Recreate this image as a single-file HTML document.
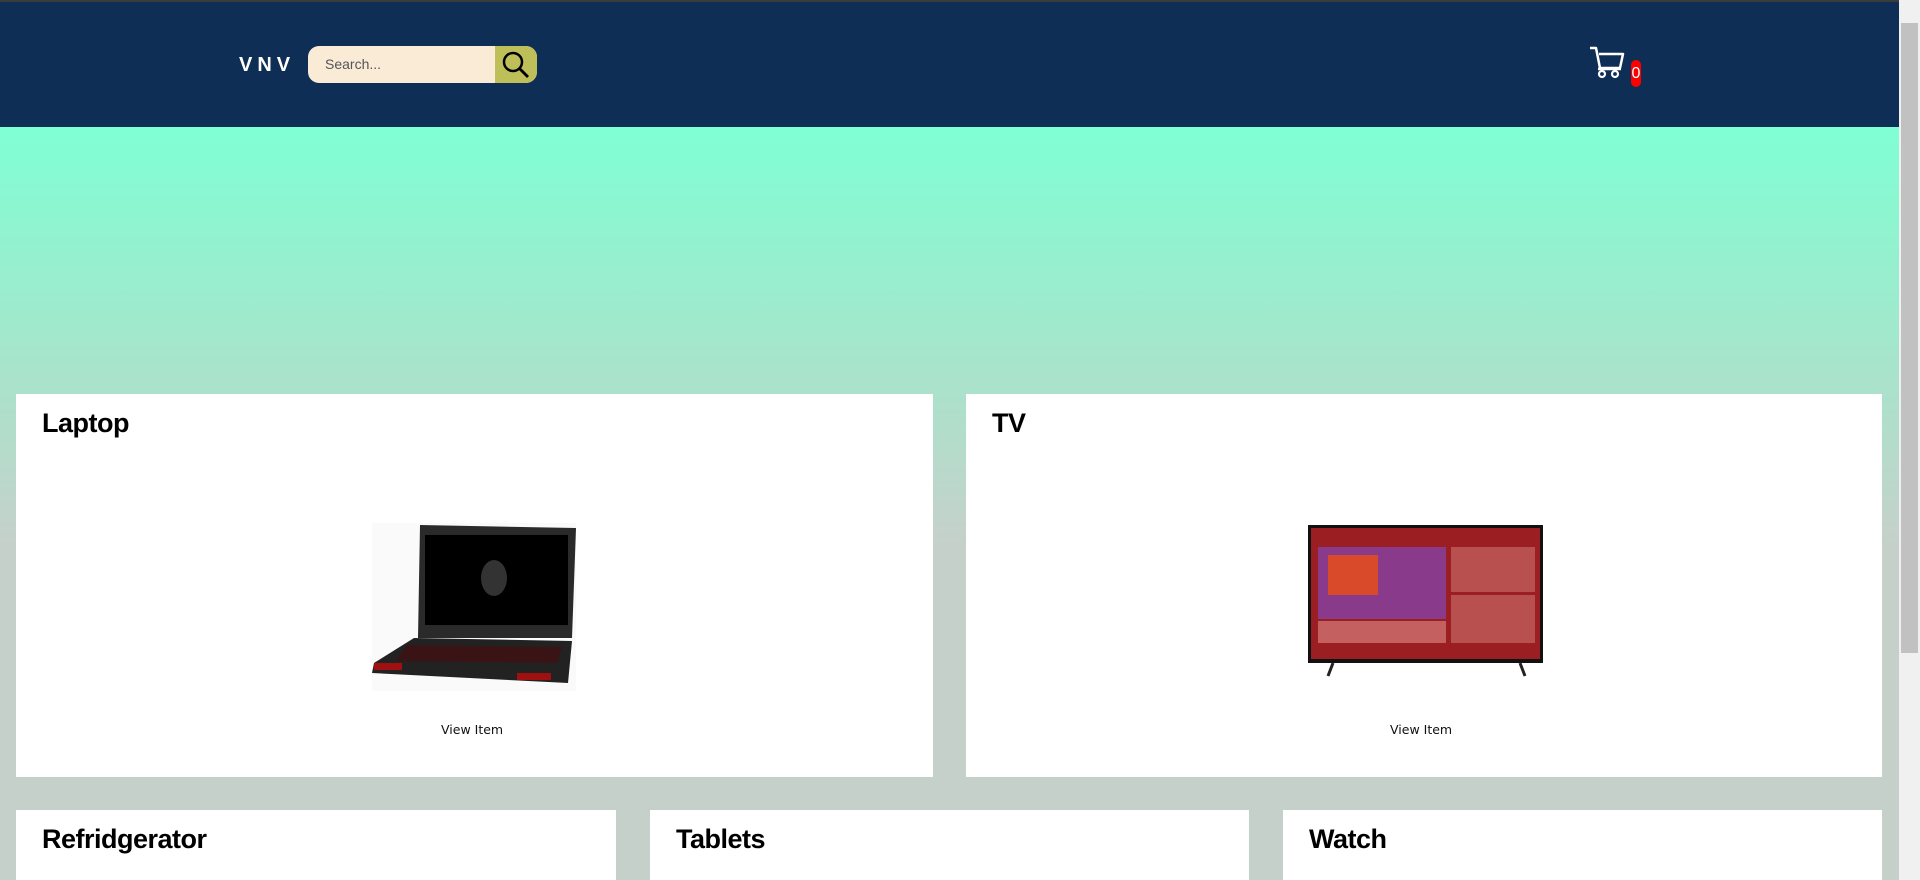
<!DOCTYPE html>
<html><head><style>
*{margin:0;padding:0;box-sizing:border-box}
body{width:1920px;height:880px;overflow:hidden;position:relative;font-family:"Liberation Sans",sans-serif;background:#c6d0cb}
.top{position:absolute;left:0;top:0;width:1899px;height:2px;background:#3c3c3c}
.hdr{position:absolute;left:0;top:2px;width:1899px;height:125px;background:#0f2e55}
.grad{position:absolute;left:0;top:127px;width:1899px;height:753px;background:linear-gradient(#7fffd4 0px,#a9e3cb 250px,#c6d0cb 420px,#c6d0cb 753px)}
.logo{position:absolute;left:239px;top:54px;color:#fff;font-weight:bold;font-size:20px;letter-spacing:5px}
.search{position:absolute;left:308px;top:46px;width:229px;height:37px;background:#faebd7;border-radius:11px;overflow:hidden}
.search span{position:absolute;left:17px;top:10px;font-size:14px;color:#555}
.search .btn{position:absolute;right:0;top:0;width:42px;height:37px;background:#bfbf5a}
.sb{position:absolute;left:1899px;top:0;width:21px;height:880px;background:#f0f0f0}
.sb .th{position:absolute;left:2px;top:23px;width:17px;height:630px;background:#c1c1c1}
.card{position:absolute;background:#fff}
.card h2{position:absolute;left:26px;top:14px;font-size:27px;font-weight:bold;color:#000;letter-spacing:-0.5px}
.vi{position:absolute;font-family:"DejaVu Sans",sans-serif;font-size:12.5px;color:#111}
</style></head><body>
<div class="top"></div>
<div class="hdr"></div>
<div class="grad"></div>
<div class="logo">VNV</div>
<div class="search"><span>Search...</span><div class="btn">
<svg width="42" height="37" viewBox="0 0 42 37"><circle cx="18" cy="16" r="9" fill="none" stroke="#000" stroke-width="2.5"/><line x1="24.5" y1="22.5" x2="33" y2="31" stroke="#000" stroke-width="2.8"/></svg></div></div>
<svg style="position:absolute;left:1588px;top:45px" width="40" height="36" viewBox="0 0 40 36"><path d="M2 3h6l4 20h20l3-14H11" fill="none" stroke="#fff" stroke-width="2.5" stroke-linejoin="round"/><line x1="10" y1="24" x2="33" y2="24" stroke="#fff" stroke-width="2.5"/><circle cx="14" cy="29" r="3" fill="none" stroke="#fff" stroke-width="2.2"/><circle cx="27" cy="29" r="3" fill="none" stroke="#fff" stroke-width="2.2"/></svg>
<div style="position:absolute;left:1631px;top:60px;width:10px;height:27px;background:#f00;border-radius:5px;color:#fff;font-size:16px;text-align:center;line-height:27px">0</div>
<div class="sb"><div class="th"></div></div>

<div class="card" style="left:16px;top:394px;width:917px;height:383px"><h2>Laptop</h2>
<svg style="position:absolute;left:356px;top:129px" width="204" height="168" viewBox="0 0 204 168">
<rect width="204" height="168" fill="#fafafa"/>
<path d="M48 2 L204 5 L200 115 L46 115Z" fill="#2a2a2a"/>
<rect x="53" y="12" width="143" height="90" fill="#000"/>
<ellipse cx="122" cy="55" rx="13" ry="18" fill="#333"/>
<path d="M42 115 L200 118 L196 160 L0 150 L2 140Z" fill="#222"/>
<path d="M35 122 L190 124 L185 140 L24 138Z" fill="#3a1414"/>
<rect x="2" y="140" width="28" height="7" fill="#a01010"/>
<rect x="145" y="150" width="34" height="7" fill="#a01010"/>
</svg>
<div class="vi" style="left:425px;top:328px">View Item</div></div>

<div class="card" style="left:966px;top:394px;width:916px;height:383px"><h2>TV</h2>
<svg style="position:absolute;left:342px;top:131px" width="235" height="166" viewBox="0 0 235 166">
<rect width="235" height="166" fill="#fff"/>
<rect x="0" y="0" width="235" height="138" fill="#111"/>
<rect x="3" y="3" width="229" height="131" fill="#9a1e22"/>
<rect x="10" y="22" width="128" height="72" fill="#8a3a8a"/>
<rect x="20" y="30" width="50" height="40" fill="#d84a2a"/>
<rect x="10" y="96" width="128" height="22" fill="#c46060"/>
<rect x="143" y="22" width="84" height="45" fill="#b85050"/>
<rect x="143" y="70" width="84" height="48" fill="#b85050"/>
<path d="M25 138 L20 151 M212 138 L217 151" stroke="#222" stroke-width="3"/>
</svg>
<div class="vi" style="left:424px;top:328px">View Item</div></div>

<div class="card" style="left:16px;top:810px;width:600px;height:70px"><h2>Refridgerator</h2></div>
<div class="card" style="left:650px;top:810px;width:599px;height:70px"><h2>Tablets</h2></div>
<div class="card" style="left:1283px;top:810px;width:599px;height:70px"><h2>Watch</h2></div>
</body></html>
